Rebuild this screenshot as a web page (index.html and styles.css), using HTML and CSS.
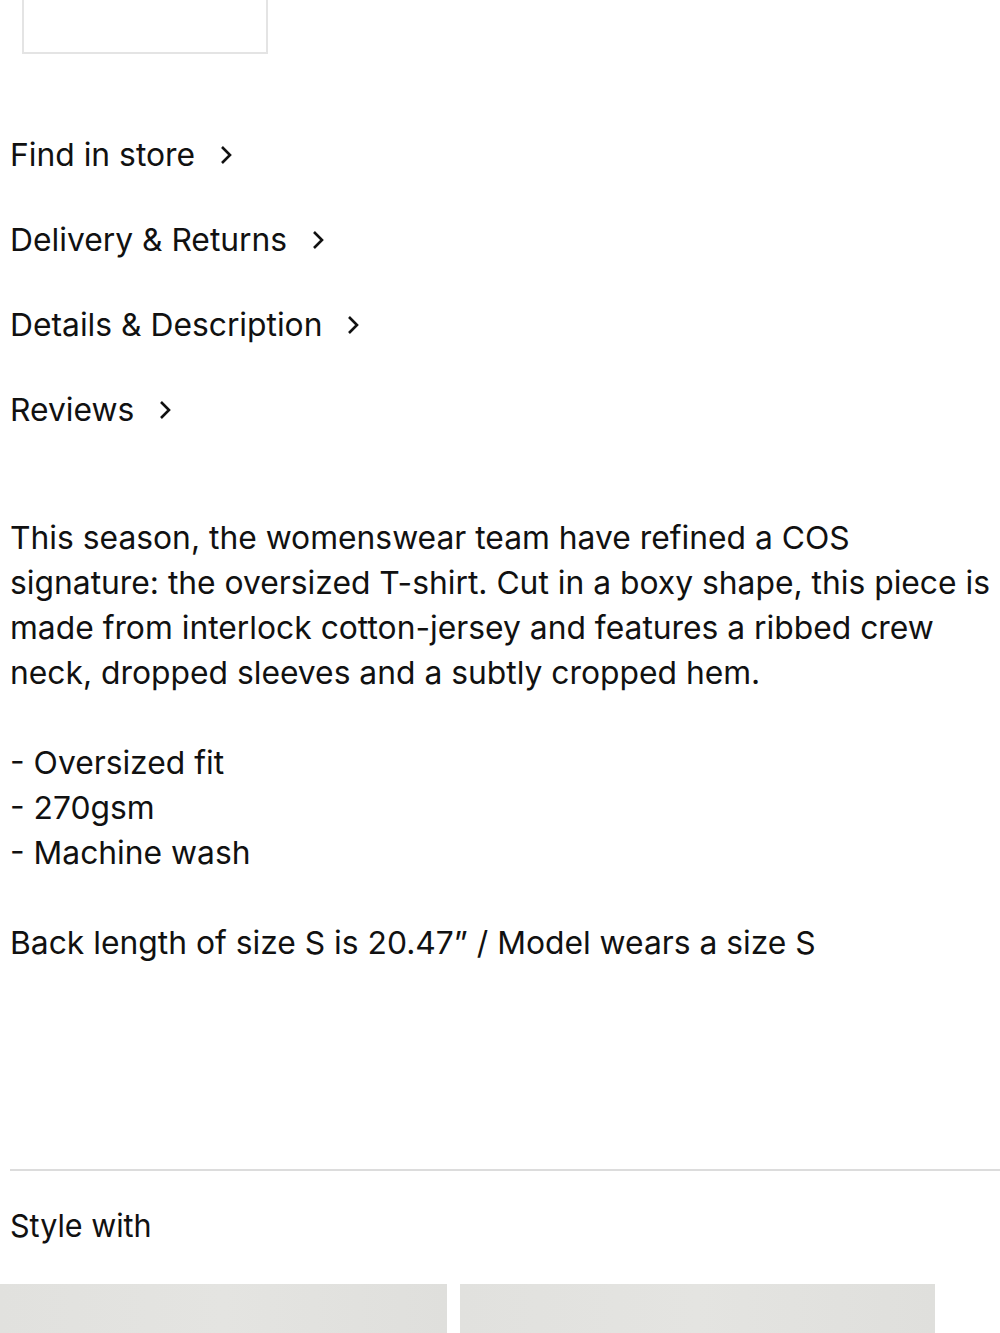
FILE: index.html
```html
<!DOCTYPE html>
<html lang="en">
<head>
<meta charset="utf-8">
<title>Product details</title>
<link rel="stylesheet" href="styles.css">
</head>
<body>
<div class="page">
  <div class="swatch-box"></div>

  <nav class="links">
    <a class="link-row" href="#">Find in store <svg class="chev" viewBox="0 0 12 20" width="12" height="20"><path d="M2 2 L10 10 L2 18" fill="none" stroke="#111" stroke-width="2.6"/></svg></a>
    <a class="link-row" href="#">Delivery &amp; Returns <svg class="chev" viewBox="0 0 12 20" width="12" height="20"><path d="M2 2 L10 10 L2 18" fill="none" stroke="#111" stroke-width="2.6"/></svg></a>
    <a class="link-row" href="#">Details &amp; Description <svg class="chev" viewBox="0 0 12 20" width="12" height="20"><path d="M2 2 L10 10 L2 18" fill="none" stroke="#111" stroke-width="2.6"/></svg></a>
    <a class="link-row" href="#">Reviews <svg class="chev" viewBox="0 0 12 20" width="12" height="20"><path d="M2 2 L10 10 L2 18" fill="none" stroke="#111" stroke-width="2.6"/></svg></a>
  </nav>

  <div class="description">This season, the womenswear team have refined a COS signature: the oversized T-shirt. Cut in a boxy shape, this piece is made from interlock cotton-jersey and features a ribbed crew neck, dropped sleeves and a subtly cropped hem.

 - Oversized fit
 - 270gsm
 - Machine wash

Back length of size S is 20.47” / Model wears a size S</div>

  <hr class="divider">

  <h2 class="style-title"><span>Style with</span></h2>
</div>
<div class="carousel">
  <div class="tile tile-a"></div>
  <div class="tile tile-b"></div>
</div>
</body>
</html>
```

FILE: styles.css
```css
html, body {
  margin: 0;
  padding: 0;
  background: #fff;
  overflow: hidden;
}
body {
  font-family: Inter, "Noto Sans", "Liberation Sans", sans-serif;
  color: #111;
  font-size: 31.8px;
}
.page {
  padding-left: 10px;
}
.swatch-box {
  margin-left: 12px;
  margin-top: -40px;
  width: 242px;
  height: 90px;
  border: 2px solid #e4e4e4;
}
.links {
  display: flex;
  flex-direction: column;
  gap: 45px;
  margin-top: 81px;
}
.link-row {
  display: flex;
  align-items: center;
  gap: 25px;
  height: 40px;
  line-height: 40px;
  color: #111;
  text-decoration: none;
  width: max-content;
}
.chev {
  display: block;
}
.description {
  margin-top: 85px;
  white-space: pre-line;
  line-height: 45px;
}
.divider {
  margin: 204px 0 0 0;
  border: 0;
  height: 2px;
  background: #dcdcdc;
}
.style-title {
  margin: 35px 0 0 0;
  font-weight: 400;
  font-size: 31.8px;
  line-height: 40px;
}
.style-title span {
  display: inline-block;
  transform: scaleX(0.96);
  transform-origin: left center;
}
.carousel {
  display: flex;
  gap: 13px;
  margin-top: 38px;
}
.tile {
  height: 600px;
  background: linear-gradient(90deg, #e1e1de, #e4e4e1 50%, #dfdfdc);
  flex: none;
}
.tile-a { width: 447px; }
.tile-b { width: 475px; }
```
